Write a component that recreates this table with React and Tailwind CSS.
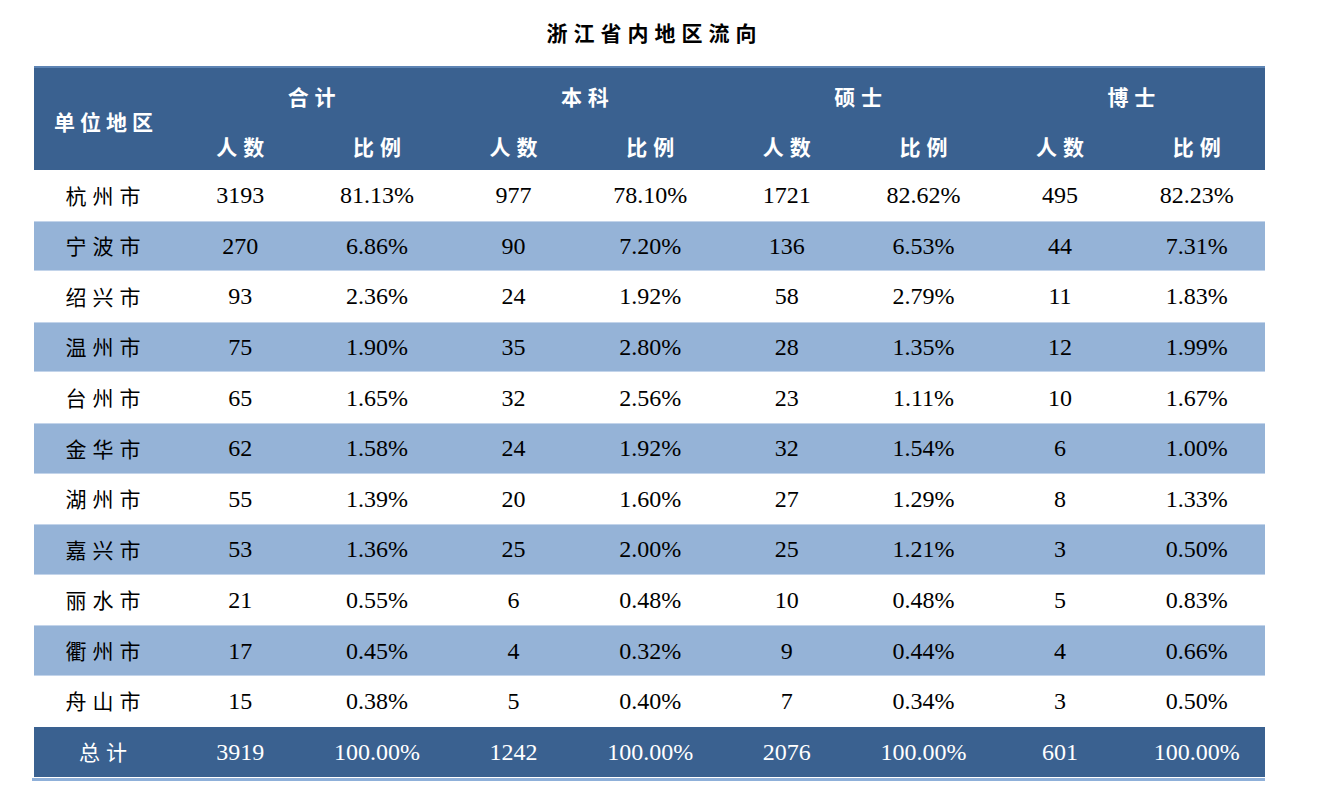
const rows = [
  ["杭州市", "3193", "81.13%", "977", "78.10%", "1721", "82.62%", "495", "82.23%"],
  ["宁波市", "270", "6.86%", "90", "7.20%", "136", "6.53%", "44", "7.31%"],
  ["绍兴市", "93", "2.36%", "24", "1.92%", "58", "2.79%", "11", "1.83%"],
  ["温州市", "75", "1.90%", "35", "2.80%", "28", "1.35%", "12", "1.99%"],
  ["台州市", "65", "1.65%", "32", "2.56%", "23", "1.11%", "10", "1.67%"],
  ["金华市", "62", "1.58%", "24", "1.92%", "32", "1.54%", "6", "1.00%"],
  ["湖州市", "55", "1.39%", "20", "1.60%", "27", "1.29%", "8", "1.33%"],
  ["嘉兴市", "53", "1.36%", "25", "2.00%", "25", "1.21%", "3", "0.50%"],
  ["丽水市", "21", "0.55%", "6", "0.48%", "10", "0.48%", "5", "0.83%"],
  ["衢州市", "17", "0.45%", "4", "0.32%", "9", "0.44%", "4", "0.66%"],
  ["舟山市", "15", "0.38%", "5", "0.40%", "7", "0.34%", "3", "0.50%"],
];

const total = ["总计", "3919", "100.00%", "1242", "100.00%", "2076", "100.00%", "601", "100.00%"];

const groups = ["合计", "本科", "硕士", "博士"];

const cjk = { fontFamily: '"Noto Sans CJK SC", sans-serif' };
const num = { fontFamily: '"Liberation Serif", "Noto Sans CJK SC", serif' };

function Row({ cells, shaded, dark }) {
  const bg = dark ? "bg-[#3a6190] text-white" : shaded ? "bg-[#95b3d7] text-black border-y border-[#c3d4ea]" : "bg-white text-black";
  return (
    <div className={`grid grid-cols-[138px_repeat(8,1fr)] h-[50.6px] items-center ${bg}`}>
      <div className="text-center text-[21px] tracking-[6px] pl-[6px]" style={cjk}>
        {cells[0]}
      </div>
      {cells.slice(1).map((c, i) => (
        <div key={i} className="text-center text-[24px]" style={num}>
          {c}
        </div>
      ))}
    </div>
  );
}

export default function App() {
  return (
    <div className="w-[1328px] h-[806px] bg-white pl-[34px]">
      <div className="w-[1231px]">
        {/* title */}
        <div className="h-[66px] flex items-center justify-center pl-[10px]">
          <h1 className="text-[21px] font-bold tracking-[6px] text-black" style={cjk}>
            浙江省内地区流向
          </h1>
        </div>

        {/* header */}
        <div className="bg-[#3a6190] border-t-2 border-[#5d84b4] text-white font-bold grid grid-cols-[138px_repeat(8,1fr)] grid-rows-[57px_45px]" style={cjk}>
          <div className="row-span-2 flex items-center justify-center pt-[6px] pl-[6px] text-[21px] tracking-[5px]">
            单位地区
          </div>
          {groups.map((g) => (
            <div key={g} className="col-span-2 flex items-center justify-center pl-[12px] text-[21px] tracking-[6px]">
              {g}
            </div>
          ))}
          {groups.map((g) => [
            <div key={g + "a"} className="flex items-center justify-center pb-[2px] pl-[6px] text-[21px] tracking-[6px]">
              人数
            </div>,
            <div key={g + "b"} className="flex items-center justify-center pb-[2px] pl-[6px] text-[21px] tracking-[6px]">
              比例
            </div>,
          ])}
        </div>

        {/* body */}
        {rows.map((r, i) => (
          <Row key={r[0]} cells={r} shaded={i % 2 === 1} />
        ))}
        <Row cells={total} dark />

        {/* bottom rule */}
        <div className="h-[3px] -ml-[2px] mt-[1px] bg-[#8fb0d9]" />
      </div>
    </div>
  );
}
